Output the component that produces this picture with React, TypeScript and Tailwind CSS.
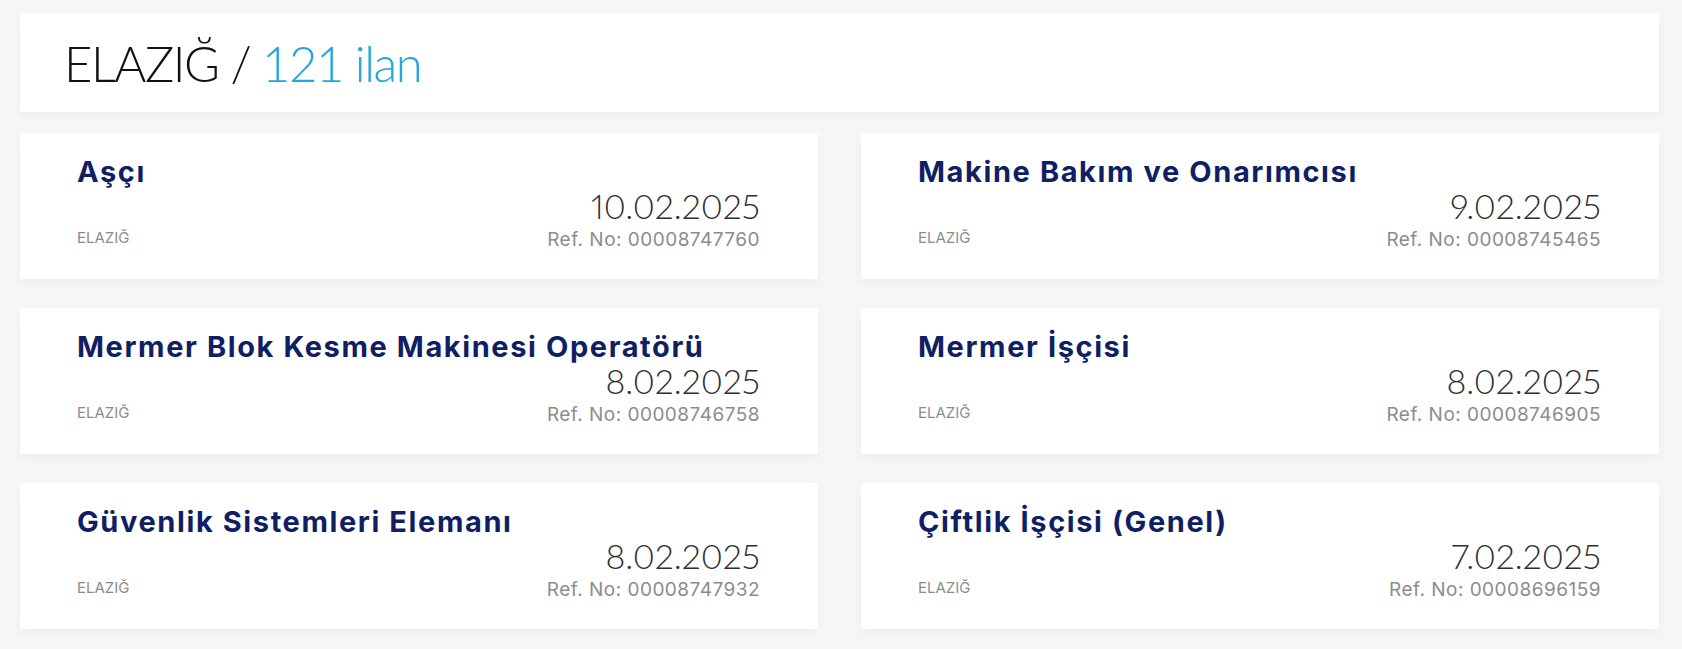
import React from "react";

type Job = { title: string; date: string; ref: string };

const jobs: Job[] = [
  { title: "Aşçı", date: "10.02.2025", ref: "00008747760" },
  { title: "Makine Bakım ve Onarımcısı", date: "9.02.2025", ref: "00008745465" },
  { title: "Mermer Blok Kesme Makinesi Operatörü", date: "8.02.2025", ref: "00008746758" },
  { title: "Mermer İşçisi", date: "8.02.2025", ref: "00008746905" },
  { title: "Güvenlik Sistemleri Elemanı", date: "8.02.2025", ref: "00008747932" },
  { title: "Çiftlik İşçisi (Genel)", date: "7.02.2025", ref: "00008696159" },
];

function Card({ job }: { job: Job }) {
  return (
    <div className="h-[146px] bg-white shadow-[0_4px_10px_rgba(0,0,0,0.045)] pl-[57px] pr-[58px] pt-[21px] flex flex-col">
      <div className="font-['Inter',sans-serif] font-bold text-[29px] leading-[35px] tracking-[0.055em] text-[#101e63] whitespace-nowrap">
        {job.title}
      </div>
      <div className="flex justify-between items-end">
        <div className="mb-[4px] font-['Inter',sans-serif] text-[15px] leading-[20px] text-[#8c8c8c]">ELAZIĞ</div>
        <div className="flex flex-col items-end">
          <div className="font-['Lato',sans-serif] font-light text-[34px] leading-[34px] proportional-nums text-[#2f2f2f]">
            {job.date}
          </div>
          <div className="mt-[5px] font-['Inter',sans-serif] text-[19px] leading-[24px] tracking-[0.025em] text-[#8c8c8c]">
            Ref. No: {job.ref}
          </div>
        </div>
      </div>
    </div>
  );
}

export default function App() {
  return (
    <div className="min-h-screen bg-[#f6f6f6] pt-[13px] pl-[20px] pr-[23px] pb-[20px]">
      <div className="h-[99px] bg-white shadow-[0_4px_10px_rgba(0,0,0,0.045)] pl-[44px] pt-[26px]">
        <div className="font-['Lato',sans-serif] font-light text-[49px] leading-[49px] tracking-[-0.03em] whitespace-nowrap">
          <span className="text-[#111111]">ELAZIĞ / </span>
          <span className="text-[#21a6df]">121 ilan</span>
        </div>
      </div>
      <div className="mt-[21px] grid grid-cols-2 gap-x-[43px] gap-y-[29px]">
        {jobs.map((j) => (
          <Card key={j.ref} job={j} />
        ))}
      </div>
    </div>
  );
}
